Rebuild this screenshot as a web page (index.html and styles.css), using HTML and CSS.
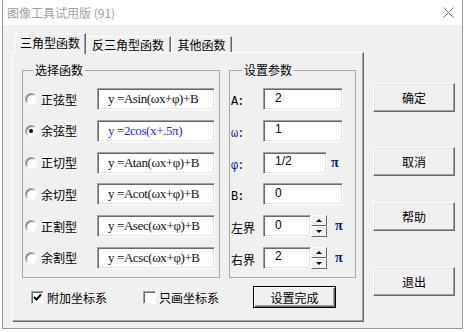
FILE: index.html
```html
<!DOCTYPE html>
<html>
<head>
    <title>图像工具试用版</title>
    <link rel="stylesheet" href="styles.css">
</head>
<body>
    <div class="window">
        <div class="titlebar">
            <span class="title">图像工具试用版 (91)</span>
            <svg class="close" width="11" height="11" viewBox="0 0 11 11">
                <path d="M0.5 0.5 L10.5 10.5 M10.5 0.5 L0.5 10.5" stroke="#707070" stroke-width="1" fill="none"/>
            </svg>
        </div>
        <div class="client">
            <div class="sheet">
                <div class="tabs">
                    <div class="tab active">三角型函数</div>
                    <div class="tab t2">反三角型函数</div>
                    <div class="tab t3">其他函数</div>
                </div>
                <div class="panel">
                    <div class="groups">
                        <fieldset class="group funcs">
                            <legend>选择函数</legend>
                            <div class="row"><span class="radio"></span><span class="opt">正弦型</span><span class="edit formula">y =Asin(ωx+φ)+B</span></div>
                            <div class="row"><span class="radio on"></span><span class="opt">余弦型</span><span class="edit formula blue">y =2cos(x+.5π)</span></div>
                            <div class="row"><span class="radio"></span><span class="opt">正切型</span><span class="edit formula">y =Atan(ωx+φ)+B</span></div>
                            <div class="row"><span class="radio"></span><span class="opt">余切型</span><span class="edit formula">y =Acot(ωx+φ)+B</span></div>
                            <div class="row"><span class="radio"></span><span class="opt">正割型</span><span class="edit formula">y =Asec(ωx+φ)+B</span></div>
                            <div class="row"><span class="radio"></span><span class="opt">余割型</span><span class="edit formula">y =Acsc(ωx+φ)+B</span></div>
                        </fieldset>
                        <fieldset class="group params">
                            <legend>设置参数</legend>
                            <div class="row"><span class="plabel">A:</span><span class="edit num">2</span></div>
                            <div class="row"><span class="plabel navy">ω:</span><span class="edit num">1</span></div>
                            <div class="row"><span class="plabel navy">φ:</span><span class="edit num short">1/2</span><span class="pi">π</span></div>
                            <div class="row"><span class="plabel">B:</span><span class="edit num">0</span></div>
                            <div class="row">
                                <span class="plabel cjk">左界</span><span class="edit num spin">0</span>
                                <span class="spinner"><span class="sbtn up"></span><span class="sbtn down"></span></span>
                                <span class="pi far">π</span>
                            </div>
                            <div class="row">
                                <span class="plabel cjk">右界</span><span class="edit num spin">2</span>
                                <span class="spinner"><span class="sbtn up"></span><span class="sbtn down"></span></span>
                                <span class="pi far">π</span>
                            </div>
                        </fieldset>
                    </div>
                    <div class="footer">
                        <label class="check first">
                            <span class="box">
                                <svg width="9" height="9" viewBox="0 0 9 9"><path d="M1 4 L3.5 6.5 L8 1.5" stroke="#000" stroke-width="2" fill="none"/></svg>
                            </span>附加坐标系
                        </label>
                        <label class="check second"><span class="box"></span>只画坐标系</label>
                        <button class="btn default">设置完成</button>
                    </div>
                </div>
            </div>
            <div class="actions">
                <button class="btn side">确定</button>
                <button class="btn side cancel">取消</button>
                <button class="btn side help">帮助</button>
                <button class="btn side quit">退出</button>
            </div>
        </div>
    </div>
</body>
</html>
```

FILE: styles.css
```css
body {
    margin: 0;
    background-color: #fff;
    font-family: "Noto Sans CJK SC", sans-serif;
    font-size: 12px;
    color: #000;
}

.window {
    margin-left: 2px;
    width: 459px;
    height: 328px;
    border: 1px solid #9a9a9a;
    border-top: none;
    display: flex;
    flex-direction: column;
}

.titlebar {
    height: 25px;
    flex-shrink: 0;
    background-color: #fff;
    display: flex;
    align-items: center;
    justify-content: space-between;
    padding: 0 8px 0 4px;
}

.title {
    color: #a0a0a0;
    font-size: 12px;
}

.client {
    flex: 1;
    background-color: #f0f0f0;
    display: flex;
    padding: 8px 0 0 9px;
}

.sheet {
    width: 352px;
}

/* tabs */
.tabs {
    display: flex;
    align-items: flex-end;
    height: 19px;
    padding-left: 2px;
}

.tab {
    box-sizing: border-box;
    height: 16px;
    line-height: 15px;
    text-align: center;
    border-top: 1px solid #fff;
    border-left: 1px solid #fff;
    border-right: 1px solid #696969;
    box-shadow: inset -1px 0 0 #a0a0a0;
}

.tab.active {
    position: relative;
    z-index: 1;
    width: 72px;
    height: 21px;
    line-height: 18px;
    margin-bottom: -2px;
    background-color: #f0f0f0;
}

.tab.t2 {
    width: 85px;
    border-left: none;
}

.tab.t3 {
    width: 61px;
}

.panel {
    box-sizing: border-box;
    height: 270px;
    border: 1px solid;
    border-color: #fff #696969 #696969 #fff;
    box-shadow: inset -1px -1px 0 #a0a0a0;
    padding: 10px 0 0 9px;
}

/* group boxes */
.groups {
    display: flex;
    gap: 9px;
}

.group {
    box-sizing: border-box;
    margin: 0;
    height: 215px;
    border: 1px solid #a9a9a9;
    padding: 11px 0 0 2px;
}

.group legend {
    margin-left: 8px;
    padding: 0 2px;
    line-height: 14px;
    font-size: 12px;
}

.funcs {
    width: 198px;
}

.params {
    width: 127px;
    padding-left: 1px;
}

.params legend {
    margin-left: 11px;
}

.row {
    display: flex;
    align-items: center;
    height: 22px;
}

.row + .row {
    margin-top: 9.8px;
}

.radio {
    box-sizing: border-box;
    width: 12px;
    height: 12px;
    border-radius: 50%;
    border: 1px solid;
    border-color: #a0a0a0 #fff #fff #a0a0a0;
    background-color: #fff;
    box-shadow: inset 1px 1px 0 #7a7a7a;
    display: flex;
    align-items: center;
    justify-content: center;
}

.radio.on::after {
    content: "";
    width: 4px;
    height: 4px;
    border-radius: 50%;
    background-color: #000;
}

.opt {
    margin-left: 4px;
}

.edit {
    box-sizing: border-box;
    height: 22px;
    background-color: #fff;
    border: 1px solid;
    border-color: #a0a0a0 #fff #fff #a0a0a0;
    box-shadow: inset 1px 1px 0 #696969, inset -1px -1px 0 #e3e3e3;
    display: flex;
    align-items: center;
    white-space: nowrap;
}

.formula {
    width: 118px;
    margin-left: auto;
    margin-right: 4px;
    padding-left: 10px;
    font-family: "Liberation Serif", serif;
    font-size: 13px;
    letter-spacing: -0.4px;
    color: #111;
}

.formula.blue {
    color: #2424e6;
}

.plabel {
    width: 32px;
    padding-top: 6px;
    font-family: "Liberation Mono", monospace;
    font-size: 12px;
    letter-spacing: -1px;
}

.plabel.cjk {
    font-family: "Noto Sans CJK SC", sans-serif;
    font-size: 12px;
    letter-spacing: 0;
    padding-top: 3px;
}

.navy {
    color: #0a1a80;
}

.num {
    width: 80px;
    padding-left: 11px;
    padding-bottom: 3px;
    font-family: "Liberation Sans", sans-serif;
    font-size: 12px;
}

.num.short {
    width: 64px;
}

.num.spin {
    width: 48px;
}

.pi {
    margin-left: 4px;
    font-family: "Liberation Serif", serif;
    font-weight: bold;
    font-size: 14px;
    color: #0a1a80;
}

.pi.far {
    margin-left: 8px;
}

.spinner {
    width: 16px;
    height: 22px;
    display: flex;
    flex-direction: column;
}

.sbtn {
    flex: 1;
    box-sizing: border-box;
    border: 1px solid;
    border-color: #fff #696969 #696969 #fff;
    background-color: #f0f0f0;
    display: flex;
    align-items: center;
    justify-content: center;
}

.sbtn.up::after {
    content: "";
    border-left: 3px solid transparent;
    border-right: 3px solid transparent;
    border-bottom: 3px solid #000;
}

.sbtn.down::after {
    content: "";
    border-left: 3px solid transparent;
    border-right: 3px solid transparent;
    border-top: 3px solid #000;
}

/* bottom row */
.footer {
    display: flex;
    align-items: center;
    height: 22px;
    margin-top: 8px;
    padding-left: 9px;
}

.check {
    display: flex;
    align-items: center;
}

.check.first {
    width: 112px;
}

.check.second {
    width: 110px;
}

.box {
    box-sizing: border-box;
    width: 13px;
    height: 13px;
    margin-right: 3px;
    background-color: #fff;
    border: 1px solid;
    border-color: #a0a0a0 #fff #fff #a0a0a0;
    box-shadow: inset 1px 1px 0 #696969;
    display: flex;
    align-items: center;
    justify-content: center;
}

.btn {
    box-sizing: border-box;
    padding: 0;
    font-family: "Noto Sans CJK SC", sans-serif;
    font-size: 12px;
    color: #000;
    background-color: #f0f0f0;
    border: 1px solid;
    border-color: #fff #696969 #696969 #fff;
    box-shadow: inset -1px -1px 0 #a0a0a0, inset 1px 1px 0 #e3e3e3;
}

.btn.default {
    width: 83px;
    height: 22px;
    border: 1px solid #000;
    box-shadow: inset 1px 1px 0 #fff, inset -1px -1px 0 #696969, inset -2px -2px 0 #a0a0a0;
}

/* right button column */
.actions {
    display: flex;
    flex-direction: column;
    margin-left: 9px;
    margin-top: 50px;
}

.side {
    width: 82px;
    height: 29px;
}

.side.cancel {
    margin-top: 35px;
}

.side.help {
    margin-top: 26px;
}

.side.quit {
    margin-top: 36px;
}
```
